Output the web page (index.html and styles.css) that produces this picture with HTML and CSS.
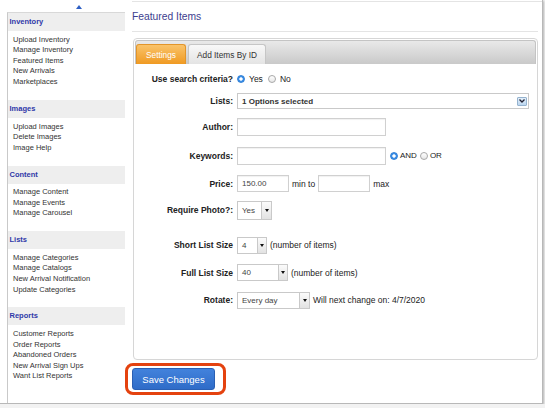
FILE: index.html
```html
<!DOCTYPE html>
<html lang="en">
<head>
  <meta charset="UTF-8" />
  <title>Featured Items</title>
  <meta name="viewport" content="width=device-width, initial-scale=1.0" />
  <link rel="stylesheet" href="styles.css">
</head>
<body>
  <div class="window">
    <aside class="sidebar">
      <div class="collapse">
        <svg width="6" height="4" viewBox="0 0 6 4"><path d="M0 4 L3 0 L6 4 Z" fill="#2d5fc4"/></svg>
      </div>
      <nav class="nav">
        <h3>Inventory</h3>
        <ul>
          <li>Upload Inventory</li><li>Manage Inventory</li><li>Featured Items</li>
          <li>New Arrivals</li><li>Marketplaces</li>
        </ul>
        <h3>Images</h3>
        <ul>
          <li>Upload Images</li><li>Delete Images</li><li>Image Help</li>
        </ul>
        <h3>Content</h3>
        <ul>
          <li>Manage Content</li><li>Manage Events</li><li>Manage Carousel</li>
        </ul>
        <h3>Lists</h3>
        <ul>
          <li>Manage Categories</li><li>Manage Catalogs</li><li>New Arrival Notification</li>
          <li>Update Categories</li>
        </ul>
        <h3>Reports</h3>
        <ul>
          <li>Customer Reports</li><li>Order Reports</li><li>Abandoned Orders</li>
          <li>New Arrival Sign Ups</li><li>Want List Reports</li>
        </ul>
      </nav>
    </aside>

    <main class="main">
      <h1>Featured Items</h1>

      <div class="panel">
        <div class="tabs">
          <span class="tab active">Settings</span>
          <span class="tab">Add Items By ID</span>
        </div>

        <div class="form">
          <div class="row row-criteria">
            <label class="lbl">Use search criteria?</label>
            <input type="radio" name="criteria" checked><span class="opt">Yes</span>
            <input type="radio" name="criteria"><span class="opt">No</span>
          </div>

          <div class="row row-lists">
            <label class="lbl">Lists:</label>
            <div class="select multi">
              <span class="val">1 Options selected</span>
              <span class="chev">
                <svg width="6" height="4" viewBox="0 0 6 4"><path d="M0.5 0.5 L3 3 L5.5 0.5" fill="none" stroke="#223" stroke-width="1.3"/></svg>
              </span>
            </div>
          </div>

          <div class="row row-author">
            <label class="lbl">Author:</label>
            <input class="text w-long" type="text">
          </div>

          <div class="row row-keywords">
            <label class="lbl">Keywords:</label>
            <input class="text w-long" type="text">
            <input class="gap-l" type="radio" name="kw" checked><span class="opt-s">AND</span>
            <input type="radio" name="kw"><span class="opt-s">OR</span>
          </div>

          <div class="row row-price">
            <label class="lbl">Price:</label>
            <input class="text w-price" type="text" value="150.00">
            <span class="note">min to</span>
            <input class="text w-price" type="text">
            <span class="note">max</span>
          </div>

          <div class="row row-photo">
            <label class="lbl">Require Photo?:</label>
            <div class="select w-photo tall">
              <span class="val">Yes</span>
              <span class="btn"><svg width="4" height="3" viewBox="0 0 4 3"><path d="M0 0 H4 L2 3 Z" fill="#111"/></svg></span>
            </div>
          </div>

          <div class="row row-short">
            <label class="lbl">Short List Size</label>
            <div class="select w-short">
              <span class="val">4</span>
              <span class="btn"><svg width="4" height="3" viewBox="0 0 4 3"><path d="M0 0 H4 L2 3 Z" fill="#111"/></svg></span>
            </div>
            <span class="note">(number of items)</span>
          </div>

          <div class="row row-full">
            <label class="lbl">Full List Size</label>
            <div class="select w-full">
              <span class="val">40</span>
              <span class="btn"><svg width="4" height="3" viewBox="0 0 4 3"><path d="M0 0 H4 L2 3 Z" fill="#111"/></svg></span>
            </div>
            <span class="note">(number of items)</span>
          </div>

          <div class="row row-rotate">
            <label class="lbl">Rotate:</label>
            <div class="select w-rotate">
              <span class="val">Every day</span>
              <span class="btn"><svg width="4" height="3" viewBox="0 0 4 3"><path d="M0 0 H4 L2 3 Z" fill="#111"/></svg></span>
            </div>
            <span class="note">Will next change on: 4/7/2020</span>
          </div>
        </div>
      </div>

      <div class="actions">
        <span class="highlight"><button class="save">Save Changes</button></span>
      </div>
    </main>
  </div>
</body>
</html>
```

FILE: styles.css
```css
body {
  margin: 0;
  background: #f2f2f2;
  color: #222;
  font-family: "Liberation Sans", Arial, Helvetica, sans-serif;
}
.window {
  display: flex;
  width: 542px;
  height: 403px;
  background: #fff;
  border-right: 1px solid #b8b8b8;
  border-bottom: 1px solid #b8b8b8;
  box-shadow: 1px 1px 2px rgba(0, 0, 0, 0.25);
}

/* sidebar */
.sidebar {
  flex: none;
  width: 118px;
  margin-left: 7px;
}
.collapse {
  height: 12px;
  box-sizing: border-box;
  padding: 5px 0 0 69px;
}
.collapse svg {
  display: block;
}
.nav {
  height: 391px;
  box-sizing: border-box;
  border-left: 1px solid #c9c9c9;
  border-top: 1px solid #d8d8d8;
}
.nav h3 {
  margin: 0;
  height: 18px;
  line-height: 18px;
  padding-left: 1.5px;
  background: #eeeeee;
  color: #2f38a8;
  font-size: 7.5px;
  font-weight: bold;
}
.nav ul {
  list-style: none;
  margin: 0;
  padding: 3.7px 0 12.2px 5px;
  font-size: 7.5px;
  line-height: 10.6px;
  color: #333;
}

/* main */
.main {
  flex: none;
  width: 410px;
  margin: 1px 0 0 7px;
  border-top: 1px solid #e4e4e4;
}
h1 {
  margin: 0 4px 0 0;
  padding: 8px 0 7px;
  line-height: 14px;
  font-size: 10.3px;
  font-weight: normal;
  color: #3d3d8e;
  border-bottom: 1px solid #e4e4e4;
}
.panel {
  height: 322px;
  box-sizing: border-box;
  margin: 6px 4px 0 1px;
  padding: 1px;
  border: 1px solid #d6d6d6;
  border-radius: 4px;
}
.tabs {
  display: flex;
  align-items: flex-end;
  gap: 2px;
  height: 24px;
  box-sizing: border-box;
  background: linear-gradient(#e9e9e9, #c9c9c9);
  border: 1px solid #c4c4c4;
  border-bottom: none;
  border-radius: 3px 3px 0 0;
}
.tab {
  height: 20px;
  line-height: 20px;
  box-sizing: border-box;
  padding: 0 8px;
  font-size: 8.3px;
  color: #333;
  background: linear-gradient(#f8f8f8, #e4e4e4);
  border: 1px solid #c6c6c6;
  border-bottom: none;
  border-radius: 3px 3px 0 0;
}
.tab.active {
  padding: 0 9px;
  color: #fff;
  background: linear-gradient(#f9c36a, #f09a22);
  border-color: #e2952a;
}

/* form rows */
.form {
  padding-top: 8px;
}
.row {
  display: flex;
  align-items: center;
  height: 17px;
  font-size: 8.5px;
}
.lbl {
  flex: none;
  width: 98px;
  margin-right: 4px;
  text-align: right;
  font-weight: bold;
  color: #222;
}
.row-criteria { height: 14px; }
.row-lists { height: 16px; margin-top: 7px; }
.row-author { height: 18px; margin-top: 9px; }
.row-keywords { height: 18px; margin-top: 10.5px; }
.row-price { margin-top: 10.5px; }
.row-photo { height: 19px; margin-top: 8.5px; }
.row-short { margin-top: 17px; }
.row-full { margin-top: 10.5px; }
.row-rotate { margin-top: 10.5px; }

input[type="radio"] {
  appearance: none;
  -webkit-appearance: none;
  flex: none;
  width: 8px;
  height: 8px;
  margin: 0;
  border: 1px solid #a8a8a8;
  border-radius: 50%;
  background: linear-gradient(#fff, #e6e6e6);
}
input[type="radio"]:checked {
  border-color: #2f7fd6;
  background: radial-gradient(circle, #fff 0 1.4px, #3b8ee6 1.9px);
}
.opt {
  margin: 0 5px 0 4px;
}
.opt-s {
  margin: 0 3px 0 2px;
  font-size: 8px;
}
.gap-l {
  margin-left: 4px !important;
}

.text {
  height: 18px;
  box-sizing: border-box;
  margin: 0;
  padding: 0 4px;
  border: 1px solid #d0d0d0;
  box-shadow: inset 0 1px 1px rgba(0, 0, 0, 0.06);
  font: 8px "Liberation Sans", Arial, sans-serif;
  color: #444;
}
.row-price .text { height: 17px; }
.w-long { width: 149px; }
.w-price { width: 52px; }
.note {
  margin: 0 3px;
  color: #222;
}

.select {
  display: flex;
  flex: none;
  height: 17px;
  box-sizing: border-box;
  border: 1px solid #c9c9c9;
  background: #fff;
}
.select.tall { height: 19px; }
.select .val {
  flex: 1;
  align-self: center;
  padding-left: 4px;
  font-size: 8px;
  color: #444;
  white-space: nowrap;
}
.select .btn {
  flex: none;
  width: 8px;
  display: flex;
  align-items: center;
  justify-content: center;
  border-left: 1px solid #c9c9c9;
  background: linear-gradient(#fbfbfb, #e2e2e2);
}
.select.multi {
  width: 292px;
  height: 16px;
  align-items: center;
}
.select.multi .val {
  font-weight: bold;
  color: #333;
}
.chev {
  flex: none;
  width: 10px;
  height: 9px;
  margin-right: 1px;
  box-sizing: border-box;
  display: flex;
  align-items: center;
  justify-content: center;
  border: 1px solid #95b3cf;
  border-radius: 1px;
  background: linear-gradient(#e3effa, #bcd6ef);
}
.w-photo { width: 35px; }
.w-photo .btn { width: 9px; }
.w-short { width: 30px; }
.w-full { width: 51px; }
.w-rotate { width: 73px; }
.w-rotate .btn { width: 9px; }

/* save */
.actions {
  display: flex;
  margin: 3px 0 0 -7px;
}
.highlight {
  padding: 2px 8px 2px 4px;
  border: 3px solid #e4420f;
  border-radius: 8px;
}
.save {
  display: block;
  width: 83px;
  height: 22px;
  padding: 0;
  border: 1px solid #2a5fb3;
  border-radius: 3px;
  background: linear-gradient(#4282dc, #2f6cc8);
  color: #fff;
  font: 9.5px "Liberation Sans", Arial, sans-serif;
}
```
